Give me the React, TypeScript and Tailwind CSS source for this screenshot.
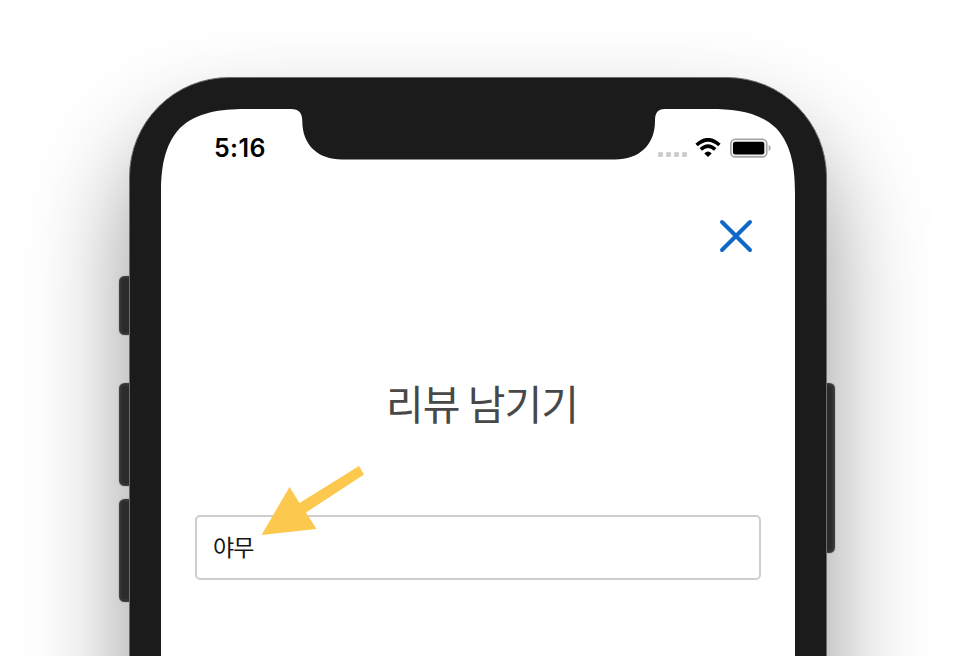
function SideButton({ className }: { className: string }) {
  return (
    <div
      className={`absolute w-4 border-2 border-[#343434] bg-[#2b2b2b] shadow-[0_0_1px_0.5px_rgba(20,20,20,0.85)] ${className}`}
    />
  );
}

function ScreenCutout() {
  return (
    <svg
      className="pointer-events-none absolute left-0 top-0"
      width="634"
      height="120"
      viewBox="0 0 634 120"
      fill="#1b1b1b"
    >
      <path d="M-1-1H84V0C60 0 36 3 19 19C3 36 0 60 0 84H-1Z" />
      <path d="M635-1H550V0C574 0 598 3 615 19C631 36 634 60 634 84H635Z" />
      <path d="M130-1V0C138 0 141.300 4 141.300 12C141.300 36 157 50.500 181 50.500H454C478 50.500 494 36 494 12C494 4 496.500 0 504 0V-1Z" />
    </svg>
  );
}

function StatusBar() {
  return (
    <div className="flex h-[78px] items-center justify-between pl-[53px] pr-[24px]">
      <span className="font-['Inter',sans-serif] text-[25px] font-semibold leading-none tracking-[0.4px]">5:16</span>
      <div className="flex items-center">
        <div className="mr-[8px] mt-[13px] flex gap-[3px]">
          <i className="size-[5px] rounded-[1.5px] bg-[#cdcdcd]" />
          <i className="size-[5px] rounded-[1.5px] bg-[#cdcdcd]" />
          <i className="size-[5px] rounded-[1.5px] bg-[#cdcdcd]" />
          <i className="size-[5px] rounded-[1.5px] bg-[#cdcdcd]" />
        </div>
        <svg className="mr-[9px]" width="26" height="20" viewBox="0 0 26 20" fill="none" stroke="#000">
          <path d="M1.600 7Q13-3.300 24.400 7" strokeWidth="3.700" />
          <path d="M5.800 11.400Q13 4.800 20.200 11.400" strokeWidth="3.500" />
          <path d="M9.300 15.400Q13 11.800 16.700 15.400L13 19Z" fill="#000" stroke="none" />
        </svg>
        <svg width="41" height="20" viewBox="0 0 41 20">
          <rect x="0.800" y="1.300" width="36" height="17.600" rx="4.500" fill="#f2f0f2" stroke="#a5a3a5" strokeWidth="1.600" />
          <rect x="3" y="3.700" width="31.300" height="12.800" rx="2.300" fill="#000" />
          <path d="M38.700 7C41.300 8 41.300 12.200 38.700 13.200Z" fill="#a5a3a5" />
        </svg>
      </div>
    </div>
  );
}

export default function App() {
  return (
    <main className="h-[656px] w-[956px] overflow-hidden bg-white pl-[129px] pt-[77px] font-['Noto_Sans_CJK_KR',sans-serif]">
      <div className="relative h-[1400px] w-[698px] rounded-[100px] shadow-[0_56px_100px_rgba(0,0,0,0.42)]">
        <SideButton className="-left-[9px] top-[200px] h-[57px] rounded-l-[5px]" />
        <SideButton className="-left-[9px] top-[307px] h-[101px] rounded-l-[5px]" />
        <SideButton className="-left-[9px] top-[423px] h-[101px] rounded-l-[5px]" />
        <SideButton className="-right-[7px] top-[307px] h-[168px] rounded-r-[5px]" />
        <div className="relative h-full rounded-[100px] border border-[#6d6d6d] bg-[#1b1b1b] px-[31px] pt-[31px]">
          <section className="relative h-[1200px] w-[634px] bg-white">
            <ScreenCutout />
            <StatusBar />
            <div className="flex justify-end pr-[42px] pt-[32px]">
              <button aria-label="닫기" className="block size-[34px]">
                <svg width="34" height="34" viewBox="0 0 34 34" stroke="#1069c9" strokeWidth="4" strokeLinecap="round">
                  <path d="M3 3L31 31M31 3L3 31" />
                </svg>
              </button>
            </div>
            <h1 className="mt-[119px] pl-[8px] text-center text-[41px] font-normal leading-[60px] tracking-[-1px] text-[#484848]">
              리뷰 남기기
            </h1>
            <div className="relative mx-[34px] mt-[83px] flex h-[65px] items-center rounded-[5px] border-2 border-[#cecece] px-[16px] pb-[4px]">
              <span className="text-[23px] leading-[34px] tracking-[-1px] text-[#161616]">야무</span>
              <svg className="absolute left-[64px] -top-[53px]" width="106" height="72" viewBox="0 0 106 72" fill="#fdc84e">
                <path d="M0.500 71L28.500 23L38.500 39L98 2L103 10.500L45 48.500L55.500 65Z" />
              </svg>
            </div>
          </section>
        </div>
      </div>
    </main>
  );
}
